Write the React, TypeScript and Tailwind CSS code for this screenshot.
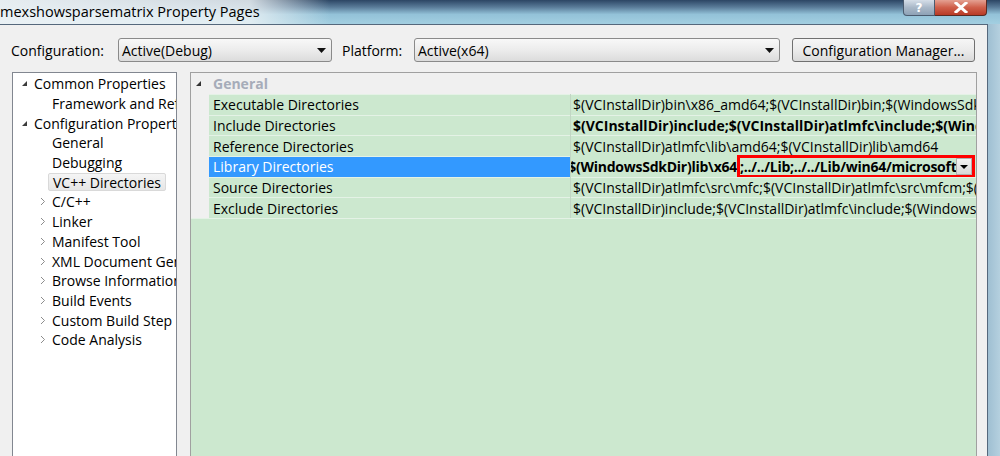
import React from "react";

const font = { fontFamily: '"Open Sans", "Noto Sans", sans-serif' };

function TreeTri() {
  return (
    <svg width="7" height="7" viewBox="0 0 7 7" className="shrink-0">
      <polygon points="6,1 6,6 1,6" fill="#3c3c3c" />
    </svg>
  );
}

function Chevron() {
  return (
    <svg width="6" height="9" viewBox="0 0 6 9" className="shrink-0">
      <polyline points="1,1 4.5,4.5 1,8" fill="none" stroke="#8c8c8c" strokeWidth="1" />
    </svg>
  );
}

function DownArrow() {
  return (
    <svg width="9" height="5" viewBox="0 0 9 5">
      <polygon points="0,0 9,0 4.5,5" fill="#111" />
    </svg>
  );
}

type TreeItem = { label: string; level: 0 | 1; kind: "open" | "closed" | "leaf"; selected?: boolean };

const tree: TreeItem[] = [
  { label: "Common Properties", level: 0, kind: "open" },
  { label: "Framework and References", level: 1, kind: "leaf" },
  { label: "Configuration Properties", level: 0, kind: "open" },
  { label: "General", level: 1, kind: "leaf" },
  { label: "Debugging", level: 1, kind: "leaf" },
  { label: "VC++ Directories", level: 1, kind: "leaf", selected: true },
  { label: "C/C++", level: 1, kind: "closed" },
  { label: "Linker", level: 1, kind: "closed" },
  { label: "Manifest Tool", level: 1, kind: "closed" },
  { label: "XML Document Generator", level: 1, kind: "closed" },
  { label: "Browse Information", level: 1, kind: "closed" },
  { label: "Build Events", level: 1, kind: "closed" },
  { label: "Custom Build Step", level: 1, kind: "closed" },
  { label: "Code Analysis", level: 1, kind: "closed" },
];

const rows: { name: string; value: string; bold?: boolean }[] = [
  { name: "Executable Directories", value: "$(VCInstallDir)bin\\x86_amd64;$(VCInstallDir)bin;$(WindowsSdkDir)bin\\NETFX 4.0 Tools;$(WindowsSdkDir)bin;$(VSInstallDir)Common7\\Tools\\bin" },
  { name: "Include Directories", value: "$(VCInstallDir)include;$(VCInstallDir)atlmfc\\include;$(WindowsSdkDir)include;$(FrameworkSDKDir)\\include", bold: true },
  { name: "Reference Directories", value: "$(VCInstallDir)atlmfc\\lib\\amd64;$(VCInstallDir)lib\\amd64" },
  { name: "Library Directories", value: "" },
  { name: "Source Directories", value: "$(VCInstallDir)atlmfc\\src\\mfc;$(VCInstallDir)atlmfc\\src\\mfcm;$(VCInstallDir)atlmfc\\src\\atl;$(VCInstallDir)crt\\src" },
  { name: "Exclude Directories", value: "$(VCInstallDir)include;$(VCInstallDir)atlmfc\\include;$(WindowsSdkDir)include;$(FrameworkSDKDir)\\include" },
];

export default function App() {
  return (
    <div className="w-[1000px] h-[456px] overflow-hidden flex flex-col bg-[#a9c9dc] text-[14px] text-black" style={font}>
      {/* Title bar */}
      <div className="h-[24px] shrink-0 flex items-start bg-[linear-gradient(to_right,rgba(236,242,245,0.97)_0px,rgba(236,242,245,0.85)_250px,rgba(236,242,245,0)_330px),linear-gradient(to_bottom,#2c4664_0%,#5a7c99_30%,#93c2d8_60%,#a3cfe1_100%)]">
        <div className="pt-[3px] pl-0 text-[14.5px] leading-[18px] text-black whitespace-nowrap">mexshowsparsematrix Property Pages</div>
        <div className="ml-auto mr-[13px] flex h-[16px]">
          <div className="w-[32px] h-[16px] rounded-bl-[4px] border border-[#4b5b6e] border-t-0 bg-[linear-gradient(to_bottom,#d5dee8,#a9b8c8_50%,#8ea2b6)] flex items-center justify-center text-white font-bold text-[12px] leading-none" style={{ fontFamily: '"DejaVu Sans", sans-serif' }}>?</div>
          <div className="w-[52px] h-[16px] rounded-br-[4px] border border-[#5a2a22] border-t-0 border-l-0 bg-[linear-gradient(to_bottom,#e4a192,#cf5f4a_50%,#b83a26)] flex items-center justify-center">
            <svg width="14" height="11" viewBox="0 0 14 11">
              <path d="M2 1 L12 10 M12 1 L2 10" stroke="#fff" strokeWidth="3" strokeLinecap="square" />
            </svg>
          </div>
        </div>
      </div>

      {/* Body + frame */}
      <div className="flex flex-1 min-h-0">
        <div className="w-[988px] shrink-0 bg-[#f0f0f0] border-t border-r border-[#55687c] flex flex-col">
          {/* Toolbar */}
          <div className="flex items-center mt-[13px] pl-[11px] h-[24px] shrink-0">
            <div className="w-[107px]">Configuration:</div>
            <div className="w-[214px] h-[24px] rounded-[3px] border border-[#8a8a8a] bg-[linear-gradient(to_bottom,#f8f8f8,#ececec_50%,#dcdcdc)] flex items-center pl-[3px] pr-[5px]">
              <span>Active(Debug)</span>
              <span className="ml-auto"><DownArrow /></span>
            </div>
            <div className="ml-[10px] w-[72px]">Platform:</div>
            <div className="w-[366px] h-[24px] rounded-[3px] border border-[#8a8a8a] bg-[linear-gradient(to_bottom,#f8f8f8,#ececec_50%,#dcdcdc)] flex items-center pl-[3px] pr-[5px]">
              <span>Active(x64)</span>
              <span className="ml-auto"><DownArrow /></span>
            </div>
            <div className="ml-[12px] w-[183px] h-[24px] rounded-[3px] border border-[#707070] bg-[linear-gradient(to_bottom,#f6f6f6,#ebebeb_50%,#dadada)] flex items-center justify-center">
              Configuration Manager...
            </div>
          </div>

          {/* Main */}
          <div className="flex flex-1 min-h-0 mt-[10px] pl-[12px] gap-[13px]">
            {/* Tree */}
            <div className="w-[165px] shrink-0 bg-white border border-b-0 border-[#828790] pt-[1px] overflow-hidden">
              {tree.map((t) => (
                <div key={t.label} className="h-[19.7px] flex items-center whitespace-nowrap">
                  {t.level === 0 ? (
                    <div className="flex items-center">
                      <div className="w-[21px] pl-[8px] flex"><TreeTri /></div>
                      <span>{t.label}</span>
                    </div>
                  ) : (
                    <div className="flex items-center">
                      <div className="w-[39px] pl-[27px] flex">{t.kind === "closed" ? <Chevron /> : null}</div>
                      <span className={t.selected ? "px-[4px] -ml-[4px] h-[18px] flex items-center rounded-[2px] border border-[#d9d9d9] bg-[linear-gradient(to_bottom,#f5f5f5,#e6e6e6)]" : ""}>{t.label}</span>
                    </div>
                  )}
                </div>
              ))}
            </div>

            {/* Property grid */}
            <div className="w-[787px] shrink-0 border border-b-0 border-[#a0a0a0] bg-[#cce8cf] flex flex-col overflow-hidden">
              <div className="h-[21px] bg-[#f0f0f0] flex items-center">
                <div className="w-[18px] pl-[5px] flex">
                  <svg width="5" height="5" viewBox="0 0 5 5"><polygon points="5,0 5,5 0,5" fill="#333" /></svg>
                </div>
                <span className="pl-[4px] font-bold text-[#a6acb9]">General</span>
              </div>
              {rows.map((r, i) => (
                <div key={r.name} className="flex h-[20.7px]">
                  <div className="w-[18px] shrink-0 bg-[#f0f0f0]" />
                  <div className={`w-[361px] shrink-0 border-t border-[#e4f2e6] flex items-center pl-[4px] whitespace-nowrap ${i === 3 ? "bg-[#3399ff] text-white" : ""}`}>
                    {r.name}
                  </div>
                  <div className="w-[1px] shrink-0 bg-[#c2d6c4]" />
                  {i === 3 ? (
                    <div className="flex-1 min-w-0 flex font-bold whitespace-nowrap tracking-[-0.25px]">
                      <div className="w-[166px] shrink-0 overflow-hidden flex justify-end items-center">
                        <span>$(VCInstallDir)lib\amd64;$(WindowsSdkDir)lib\x64</span>
                      </div>
                      <div className="flex-1 min-w-0 -mt-[1px] h-[23px] border-[3px] border-[#ff0000] flex items-center overflow-hidden mr-[1px]">
                        <span className="flex-1 min-w-0 overflow-hidden">;../../Lib;../../Lib/win64/microsoft</span>
                        <div className="w-[16px] h-[17px] shrink-0 bg-[linear-gradient(to_bottom,#f4f4f4,#d8d8d8)] border border-[#b0b0b0] flex items-center justify-center">
                          <svg width="8" height="4" viewBox="0 0 8 4"><polygon points="0,0 8,0 4,4" fill="#000" /></svg>
                        </div>
                      </div>
                    </div>
                  ) : (
                    <div className={`flex-1 min-w-0 border-t border-[#e4f2e6] flex items-center pl-[2px] whitespace-nowrap overflow-hidden ${r.bold ? "font-bold" : ""}`}>
                      {r.value}
                    </div>
                  )}
                </div>
              ))}
              <div className="flex-1 border-t border-[#e4f2e6]" />
            </div>
          </div>
        </div>
        <div className="flex-1 bg-[linear-gradient(to_right,#9fbfd2,#b5d0df)]" />
      </div>
    </div>
  );
}
